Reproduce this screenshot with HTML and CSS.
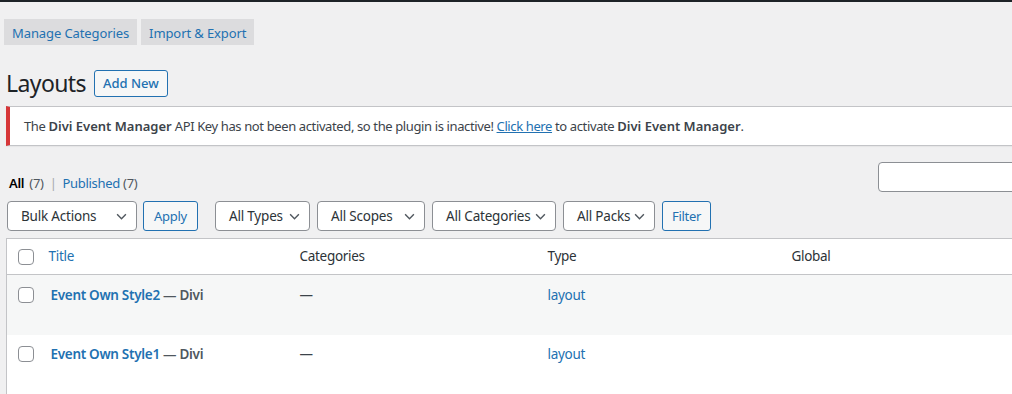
FILE: index.html
```html
<!DOCTYPE html>
<html lang="en">
<head>
    <meta charset="UTF-8">
    <title>Layouts</title>
    <link rel="stylesheet" href="styles.css">
</head>
<body>
<div class="topbar"></div>
<div id="wrap">
    <nav class="tabs">
        <a href="#" class="tab">Manage Categories</a>
        <a href="#" class="tab">Import &amp; Export</a>
    </nav>
    <div class="page-head">
        <h1>Layouts</h1>
        <a href="#" class="btn">Add New</a>
    </div>
    <div class="notice">
        <p>The <b>Divi Event Manager</b> API Key has not been activated, so the plugin is inactive! <a href="#">Click here</a> to activate <b>Divi Event Manager</b>.</p>
    </div>
    <div class="list-top">
        <ul class="subsubsub">
            <li class="current">All <span class="count">(7)</span></li>
            <li class="sep">|</li>
            <li><a href="#">Published</a> <span class="count">(7)</span></li>
        </ul>
        <input type="search" class="search">
    </div>
    <div class="tablenav">
        <div class="select w-bulk"><span>Bulk Actions</span><svg viewBox="0 0 12 8"><path d="M1 1.5l5 5 5-5"/></svg></div>
        <a href="#" class="btn btn-sm w-apply">Apply</a>
        <div class="filters">
            <div class="select w-types"><span>All Types</span><svg viewBox="0 0 12 8"><path d="M1 1.5l5 5 5-5"/></svg></div>
            <div class="select w-scopes"><span>All Scopes</span><svg viewBox="0 0 12 8"><path d="M1 1.5l5 5 5-5"/></svg></div>
            <div class="select w-cats"><span>All Categories</span><svg viewBox="0 0 12 8"><path d="M1 1.5l5 5 5-5"/></svg></div>
            <div class="select w-packs"><span>All Packs</span><svg viewBox="0 0 12 8"><path d="M1 1.5l5 5 5-5"/></svg></div>
            <a href="#" class="btn btn-sm w-filter">Filter</a>
        </div>
    </div>
    <table class="list">
        <colgroup>
            <col class="c-check">
            <col class="c-title">
            <col class="c-cat">
            <col class="c-type">
            <col class="c-global">
        </colgroup>
        <thead>
        <tr>
            <th><span class="cb"></span></th>
            <th><a href="#">Title</a></th>
            <th>Categories</th>
            <th>Type</th>
            <th>Global</th>
        </tr>
        </thead>
        <tbody>
        <tr class="alt">
            <td><span class="cb"></span></td>
            <td><strong><a href="#">Event Own Style2</a> <span class="state">— Divi</span></strong></td>
            <td>—</td>
            <td><a href="#">layout</a></td>
            <td></td>
        </tr>
        <tr>
            <td><span class="cb"></span></td>
            <td><strong><a href="#">Event Own Style1</a> <span class="state">— Divi</span></strong></td>
            <td>—</td>
            <td><a href="#">layout</a></td>
            <td></td>
        </tr>
        </tbody>
    </table>
</div>
</body>
</html>
```

FILE: styles.css
```css
* {
    margin: 0;
    padding: 0;
    box-sizing: border-box;
}

ul, ol {
    list-style: none;
}

a {
    color: #2271b1;
    text-decoration: none;
}

html, body {
    overflow: hidden;
}

body {
    background: #f0f0f1;
    color: #3c434a;
    font-family: "Noto Sans", "Open Sans", sans-serif;
    font-size: 13px;
    line-height: 1.5;
    letter-spacing: -0.3px;
}

.topbar {
    height: 2px;
    background: #1d2327;
}

#wrap {
    width: 1110px;
    margin-left: 6px;
}

.tabs {
    display: flex;
    gap: 4px;
    margin: 17px 0 0 -2px;
}

.tab {
    display: block;
    height: 26px;
    padding: 2px 8px 0;
    line-height: 24px;
    background: #dcdcde;
    letter-spacing: -0.1px;
}

.page-head {
    display: flex;
    align-items: center;
    gap: 8px;
    height: 30px;
    margin-top: 23px;
}

.page-head h1 {
    font-size: 23px;
    font-weight: 400;
    line-height: 30px;
    color: #1d2327;
    letter-spacing: -0.6px;
}

.btn {
    display: inline-block;
    height: 27px;
    line-height: 25px;
    padding: 0 8px;
    border: 1px solid #2271b1;
    border-radius: 3px;
    background: #f6f7f7;
    color: #2271b1;
    text-align: center;
}

.page-head .btn {
    font-weight: 500;
    letter-spacing: 0;
}

.notice {
    margin-top: 8px;
    background: #fff;
    border: 1px solid #c3c4c7;
    border-left: 4px solid #d63638;
    box-shadow: 0 1px 1px rgba(0, 0, 0, .04);
    padding: 9px 14px;
    line-height: 20px;
    letter-spacing: -0.38px;
}

.notice b {
    font-weight: 600;
    letter-spacing: 0;
}

.notice a {
    text-decoration: underline;
}

.list-top {
    display: flex;
    align-items: flex-end;
    justify-content: space-between;
    margin-top: 16px;
}

.subsubsub {
    display: flex;
    gap: 6px;
    padding-left: 3px;
    line-height: 20px;
    margin-bottom: -1px;
    letter-spacing: -0.3px;
}

.subsubsub .current {
    color: #000;
    font-weight: 600;
    word-spacing: 2px;
}

.count {
    color: #50575e;
    font-weight: 400;
}

.sep {
    color: #a7aaad;
}

.search {
    width: 230px;
    height: 30px;
    margin-right: 8px;
    border: 1px solid #8c8f94;
    border-radius: 4px;
    background: #fff;
}

.tablenav {
    display: flex;
    align-items: center;
    gap: 6px;
    margin-top: 9px;
    padding-left: 1px;
}

.filters {
    display: flex;
    gap: 7px;
    margin-left: 11px;
}

.select {
    display: flex;
    align-items: center;
    justify-content: space-between;
    height: 30px;
    padding: 0 9px 0 13px;
    background: #fff;
    border: 1px solid #8c8f94;
    border-radius: 4px;
    color: #2c3338;
    font-size: 13.5px;
    letter-spacing: -0.2px;
}

.select svg {
    width: 11px;
    height: 7px;
    fill: none;
    stroke: #50575e;
    stroke-width: 1.6;
}

.w-bulk {
    width: 130px;
}

.w-types {
    width: 95px;
}

.w-scopes {
    width: 108px;
}

.w-cats {
    width: 124px;
}

.w-packs {
    width: 92px;
}

.btn-sm {
    height: 30px;
    line-height: 28px;
    padding: 0;
    font-size: 13px;
}

.w-apply {
    width: 55px;
}

.w-filter {
    width: 49px;
}

.list {
    width: 1100px;
    margin-top: 7px;
    border-collapse: collapse;
    table-layout: fixed;
    background: #fff;
    border: 1px solid #c3c4c7;
}

.c-check {
    width: 33px;
}

.c-title {
    width: 251px;
}

.c-cat {
    width: 248px;
}

.c-type {
    width: 244px;
}

.list th {
    height: 36px;
    padding: 0 10px 0 9px;
    text-align: left;
    font-weight: 400;
    font-size: 13.5px;
    color: #2c3338;
    border-bottom: 1px solid #c3c4c7;
}

.list th:first-child, .list td:first-child {
    padding: 0 0 0 11px;
}

.list td {
    height: 60px;
    padding: 10px 10px 0 9px;
    vertical-align: top;
    font-size: 13.5px;
}

.list td:first-child {
    padding-top: 12px;
}

.list tr.alt td {
    background: #f6f7f7;
}

.list tr:last-child td {
    padding-top: 9px;
}

.list tr:last-child td:first-child {
    padding-top: 11px;
}

.list strong {
    display: block;
    padding-left: 2px;
    font-weight: 600;
}

.state {
    color: #50575e;
}

.cb {
    display: block;
    width: 16px;
    height: 16px;
    border: 1px solid #8c8f94;
    border-radius: 4px;
    background: #fff;
}
```
